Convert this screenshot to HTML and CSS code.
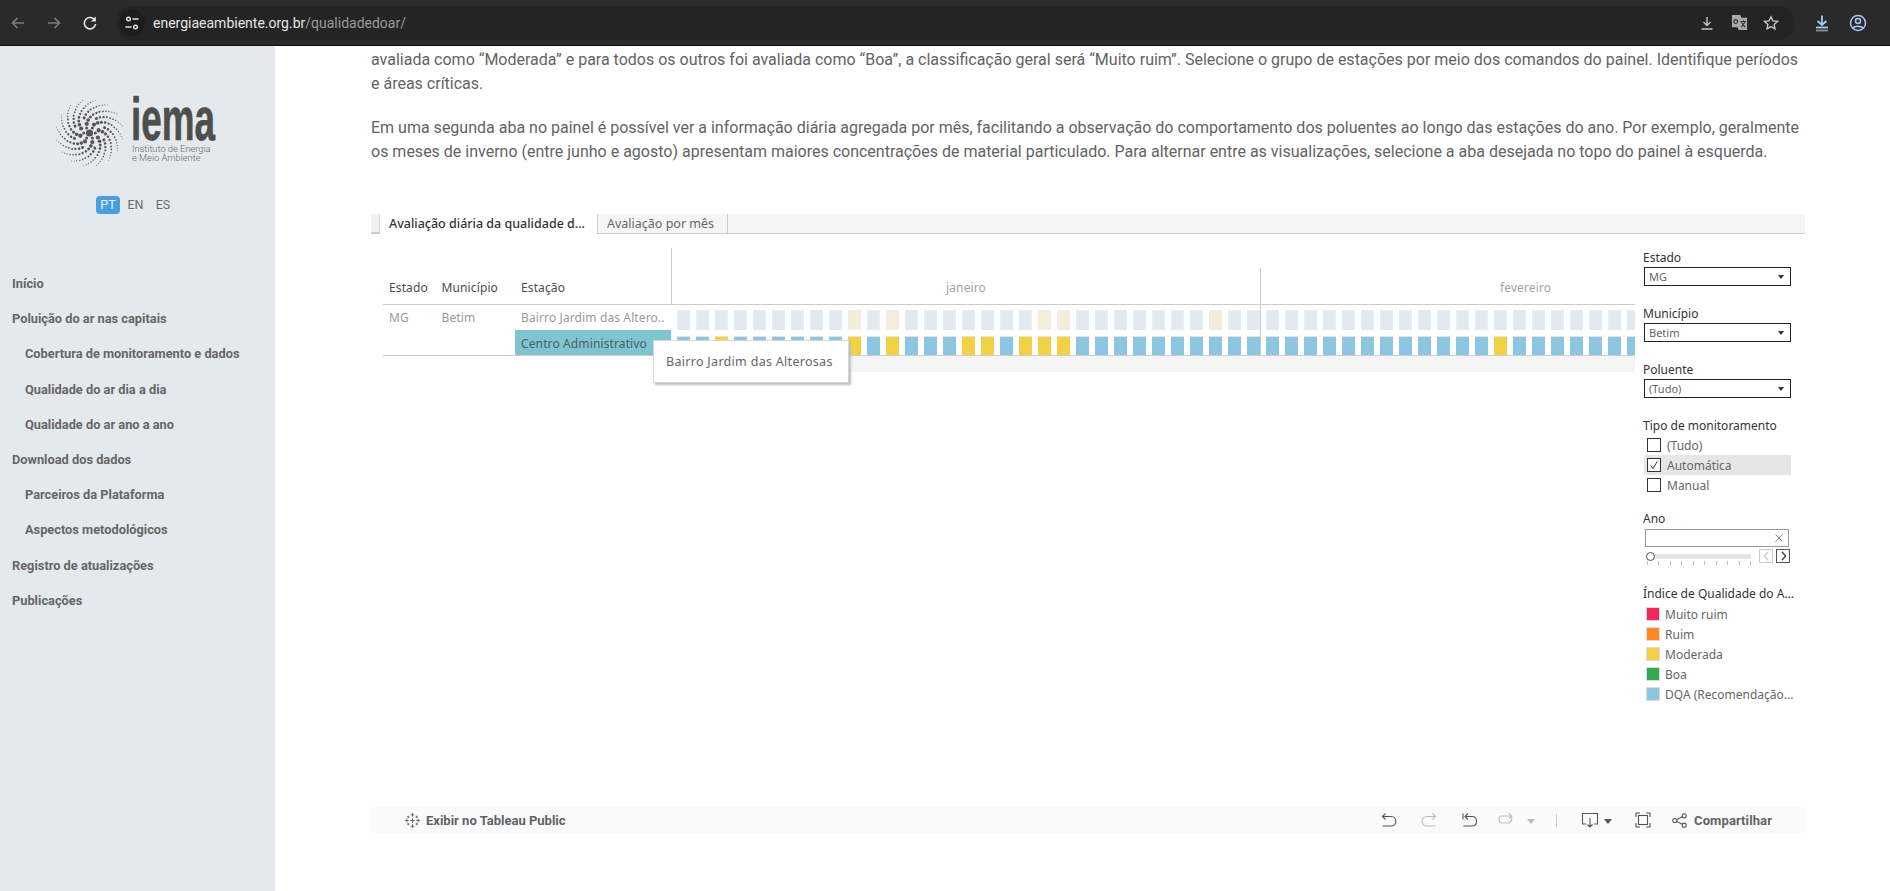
FILE: index.html
```html
<!DOCTYPE html>
<html lang="pt">
<head>
<meta charset="utf-8">
<title>Qualidade do ar</title>
<link rel="stylesheet" href="styles.css">
</head>
<body>
<header class="chrome">
  <svg class="ci dim" viewBox="0 0 16 16"><path d="M14 8H2.500M7.500 3 2.500 8l5 5"/></svg>
  <svg class="ci dim" viewBox="0 0 16 16"><path d="M2 8h11.500M8.500 3l5 5-5 5"/></svg>
  <svg class="ci lit" viewBox="0 0 16 16"><path d="M13 5.500A5.700 5.700 0 1 0 13.600 9"/><path class="fill" d="M13.800 1.600v5h-5z"/></svg>
  <div class="omnibox">
    <span class="tune"><svg viewBox="0 0 16 16"><circle cx="4.500" cy="4" r="1.800"/><path d="M8.500 4h6M1.500 12h6"/><circle cx="11.500" cy="12" r="1.800"/></svg></span>
    <span class="url">energiaeambiente.org.br<span class="path">/qualidadedoar/</span></span>
    <span class="spacer"></span>
    <svg class="oi" viewBox="0 0 16 16"><path d="M8 2v8M4.500 7 8 10.500 11.500 7M2.500 14h11"/></svg>
    <svg class="oi tr" viewBox="0 0 18 18"><path class="fill" d="M1 1h9l1 3h6v13H8l-1-3H1z"/><circle cx="5" cy="8" r="2" class="hole"/><path class="dark" d="M10 8h6M13 7v1M11 14l4-6M11 9l4 5"/></svg>
    <svg class="oi" viewBox="0 0 16 16"><path d="m8 1.800 1.900 4.100 4.500.5-3.300 3 .9 4.400L8 11.600 4 13.800l.9-4.400-3.300-3 4.500-.5z"/></svg>
  </div>
  <svg class="ci blue dl" viewBox="0 0 18 18"><path d="M9 1.500v9M4.500 7 9 11l4.500-4"/><path d="M3 13.500h12"/><path class="grey" d="M3 16.500h12"/></svg>
  <svg class="ci blue pf" viewBox="0 0 18 18"><circle cx="9" cy="9" r="7.500"/><circle cx="9" cy="7" r="2.500"/><path d="M4 14c1.500-2.500 8.500-2.500 10 0"/></svg>
</header>

<div class="page">
  <aside class="sidebar">
    <svg class="logo" viewBox="0 0 170 90">
      <defs>
        <g id="tail">
          <circle cx="10.700" cy="11.900" r="1.500"/><circle cx="10.500" cy="15.600" r="1.300"/><circle cx="9.300" cy="19.100" r="1.150"/><circle cx="8" cy="22.100" r="1"/><circle cx="5.700" cy="24.800" r=".9"/><circle cx="3.800" cy="27" r=".8"/><circle cx="1.500" cy="29" r=".7"/><circle cx="-1.100" cy="30.600" r=".6"/><circle cx="-3.300" cy="31.800" r=".5"/><circle cx="-5.800" cy="32.800" r=".45"/>
        </g>
        <g id="arm">
          <circle cx="8.400" cy="4.500" r="2.100"/><circle cx="10.100" cy="8.200" r="1.800"/><use href="#tail"/>
        </g>
      </defs>
      <g class="swirl" transform="translate(33.500 49)">
        <circle r="3.600"/>
        <circle cx="5.800" r="1.500"/><circle cx="2.900" cy="5" r="1.500"/><circle cx="-2.900" cy="5" r="1.500"/><circle cx="-5.800" r="1.500"/><circle cx="-2.900" cy="-5" r="1.500"/><circle cx="2.900" cy="-5" r="1.500"/>
        <use href="#arm"/><use href="#tail" transform="rotate(22.500)"/><use href="#arm" transform="rotate(45)"/><use href="#tail" transform="rotate(67.500)"/><use href="#arm" transform="rotate(90)"/><use href="#tail" transform="rotate(112.500)"/><use href="#arm" transform="rotate(135)"/><use href="#tail" transform="rotate(157.500)"/><use href="#arm" transform="rotate(180)"/><use href="#tail" transform="rotate(202.500)"/><use href="#arm" transform="rotate(225)"/><use href="#tail" transform="rotate(247.500)"/><use href="#arm" transform="rotate(270)"/><use href="#tail" transform="rotate(292.500)"/><use href="#arm" transform="rotate(315)"/><use href="#tail" transform="rotate(337.500)"/>
      </g>
      <text class="iema" transform="translate(75 56) scale(.604 1)">iema</text>
      <text class="inst" x="76" y="68">Instituto de Energia</text>
      <text class="inst" x="76" y="77">e Meio Ambiente</text>
    </svg>
    <div class="langs"><span class="lang on">PT</span><span class="lang">EN</span><span class="lang">ES</span></div>
    <nav class="nav">
      <a>Início</a>
      <a>Poluição do ar nas capitais</a>
      <a class="sub">Cobertura de monitoramento e dados</a>
      <a class="sub">Qualidade do ar dia a dia</a>
      <a class="sub">Qualidade do ar ano a ano</a>
      <a>Download dos dados</a>
      <a class="sub">Parceiros da Plataforma</a>
      <a class="sub">Aspectos metodológicos</a>
      <a>Registro de atualizações</a>
      <a>Publicações</a>
    </nav>
  </aside>

  <main class="main">
    <p class="para">avaliada como “Moderada” e para todos os outros foi avaliada como “Boa”, a classificação geral será “Muito ruim”. Selecione o grupo de estações por meio dos comandos do painel. Identifique períodos e áreas críticas.</p>
    <p class="para">Em uma segunda aba no painel é possível ver a informação diária agregada por mês, facilitando a observação do comportamento dos poluentes ao longo das estações do ano. Por exemplo, geralmente os meses de inverno (entre junho e agosto) apresentam maiores concentrações de material particulado. Para alternar entre as visualizações, selecione a aba desejada no topo do painel à esquerda.</p>

    <section class="viz">
      <div class="tabs">
        <span class="stub"></span>
        <span class="tab active">Avaliação diária da qualidade d...</span>
        <span class="tab">Avaliação por mês</span>
      </div>
      <div class="vizbody">
        <div class="sheet">
          <div class="thead">
            <span class="col c1 th">Estado</span>
            <span class="col c2 th">Município</span>
            <span class="col c3 th">Estação</span>
            <div class="months">
              <span class="month jan">janeiro</span>
              <span class="month feb">fevereiro</span>
            </div>
          </div>
          <div class="row r1">
            <span class="col c1">MG</span>
            <span class="col c2">Betim</span>
            <span class="col c3">Bairro Jardim das Altero..</span>
            <div class="cells">
              <i></i><i></i><i></i><i></i><i></i><i></i><i></i><i></i><i></i><i class="py"></i><i></i><i class="py"></i><i></i><i></i><i></i><i></i><i></i><i></i><i></i><i class="py"></i><i class="py"></i><i></i><i></i><i></i><i></i><i></i><i></i><i></i><i class="py"></i><i></i><i></i><i></i><i></i><i></i><i></i><i></i><i></i><i></i><i></i><i></i><i></i><i></i><i></i><i></i><i></i><i></i><i></i><i></i><i></i><i></i><i></i>
            </div>
          </div>
          <div class="row r2">
            <span class="col c1"></span>
            <span class="col c2"></span>
            <span class="col c3 hl">Centro Administrativo</span>
            <div class="cells strong">
              <i></i><i></i><i class="y"></i><i></i><i></i><i></i><i></i><i></i><i></i><i class="y"></i><i></i><i class="y"></i><i></i><i></i><i></i><i class="y"></i><i class="y"></i><i></i><i class="y"></i><i class="y"></i><i class="y"></i><i></i><i></i><i></i><i></i><i></i><i></i><i></i><i></i><i></i><i></i><i></i><i></i><i></i><i></i><i></i><i></i><i></i><i></i><i></i><i></i><i></i><i></i><i class="y"></i><i></i><i></i><i></i><i></i><i></i><i></i><i></i>
            </div>
          </div>
          <div class="band"></div>
          <div class="tooltip">Bairro Jardim das Alterosas</div>
        </div>

        <div class="filters">
          <div class="group">
            <div class="flabel">Estado</div>
            <div class="select"><span>MG</span><b class="caret"></b></div>
          </div>
          <div class="group">
            <div class="flabel">Município</div>
            <div class="select"><span>Betim</span><b class="caret"></b></div>
          </div>
          <div class="group">
            <div class="flabel">Poluente</div>
            <div class="select"><span>(Tudo)</span><b class="caret"></b></div>
          </div>
          <div class="group tight">
            <div class="flabel">Tipo de monitoramento</div>
            <div class="check"><span class="box"></span>(Tudo)</div>
            <div class="check sel"><span class="box"><svg viewBox="0 0 13 13"><path d="m3 7 2.500 3.500L10 2.500"/></svg></span>Automática</div>
            <div class="check"><span class="box"></span>Manual</div>
          </div>
          <div class="group ano">
            <div class="flabel">Ano</div>
            <div class="yearbox"><svg viewBox="0 0 8 8"><path d="m.5.5 7 7M7.500.5l-7 7"/></svg></div>
            <div class="sliderrow">
              <div class="slider"><span class="thumb"></span></div>
              <span class="step off"><svg viewBox="0 0 8 12"><path d="M6 1 1.500 6 6 11"/></svg></span>
              <span class="step"><svg viewBox="0 0 8 12"><path d="M2 1l4.500 5L2 11"/></svg></span>
            </div>
          </div>
          <div class="group legend">
            <div class="flabel">Índice de Qualidade do A...</div>
            <div class="lrow"><span class="sw s1"></span>Muito ruim</div>
            <div class="lrow"><span class="sw s2"></span>Ruim</div>
            <div class="lrow"><span class="sw s3"></span>Moderada</div>
            <div class="lrow"><span class="sw s4"></span>Boa</div>
            <div class="lrow"><span class="sw s5"></span>DQA (Recomendação...</div>
          </div>
        </div>
      </div>
      <footer class="toolbar">
        <svg class="tlogo" viewBox="0 0 18 18"><path d="M9 1v4M7 3h4M9 13v4M7 15h4M1 9h4M3 7v4M13 9h4M15 7v4M4.500 4v2.500M3.300 5.200h2.400M13.500 4v2.500M12.300 5.200h2.400M4.500 11.500V14M3.300 12.800h2.400M13.500 11.500V14M12.300 12.800h2.400M9 6.500v5M6.500 9h5"/></svg>
        <span class="tlink">Exibir no Tableau Public</span>
        <span class="spacer"></span>
        <svg class="ti undo" viewBox="0 0 16 16"><path d="M1.500 4.500H10c6.500 0 6.500 9.500 0 9.500H1.500M4.500 1.500l-3 3 3 3"/></svg>
        <svg class="ti off redo" viewBox="0 0 16 16"><path d="M14.500 4.500H6c-6.500 0-6.500 9.500 0 9.500h8.500M11.500 1.500l3 3-3 3"/></svg>
        <svg class="ti reset" viewBox="0 0 16 16"><path d="M1 1.500v6M3 4.500h7c6 0 6 9.500 0 9.500H1.500M6 1.500l-3 3 3 3"/></svg>
        <svg class="ti off all" viewBox="0 0 16 16"><path d="M14.500 4H5C1 4 1 11 5 11h6c4 0 4-5 3.500-7M12 1.500 14.500 4 12 6.500"/></svg>
        <b class="tcaret off"></b>
        <span class="tsep"></span>
        <svg class="ti dlt" viewBox="0 0 18 18"><path d="M5 13H1.500V2.500h15V13H13M9 7v9M6.500 13.500 9 16l2.500-2.500"/></svg>
        <b class="tcaret"></b>
        <svg class="ti fs" viewBox="0 0 16 16"><path d="M1 5V1h4M11 1h4v4M15 11v4h-4M5 15H1v-4"/><rect x="3.500" y="3.500" width="9" height="9"/></svg>
        <svg class="ti sh" viewBox="0 0 16 16"><circle cx="3" cy="8" r="2.200"/><circle cx="13" cy="3" r="2.200"/><circle cx="13" cy="13" r="2.200"/><path d="m5 7 6-3M5 9l6 3"/></svg>
        <span class="tlink share">Compartilhar</span>
      </footer>
    </section>
  </main>
</div>
</body>
</html>
```

FILE: styles.css
```css
* { box-sizing: border-box; }
html, body { margin: 0; height: 891px; overflow: hidden; background: #fff; }
body { font-family: Roboto, "Liberation Sans", sans-serif; }
svg { display: block; fill: none; }

/* browser chrome */
.chrome { height: 46px; background: #2a2a2a; border-bottom: 1px solid #111; display: flex; align-items: center; padding-left: 10px; }
.ci { width: 16px; height: 16px; stroke-width: 1.600; margin-right: 20px; flex: none; }
.ci.dim { stroke: #7c7c7c; }
.ci.lit { stroke: #e8e8e8; }
.ci .fill { fill: #e8e8e8; stroke: none; }
.omnibox { width: 1679px; height: 34px; margin-left: -2px; border-radius: 17px; background: #242424; display: flex; align-items: center; padding-left: 3px; flex: none; }
.tune { width: 26px; height: 26px; border-radius: 50%; background: #1d1d1d; display: flex; align-items: center; justify-content: center; margin-right: 8px; }
.tune svg { width: 16px; height: 16px; stroke: #e3e3e3; stroke-width: 1.400; }
.url { font-size: 14px; color: #e6e6e6; }
.path { color: #9a9a9a; }
.spacer { flex: 1; }
.oi { width: 16px; height: 16px; stroke: #c4c4c4; stroke-width: 1.400; margin-right: 16px; }
.oi.tr { width: 17px; height: 17px; stroke: none; margin-right: 15px; }
.oi.tr .fill { fill: #a9a9a9; }
.oi.tr .hole { fill: none; stroke: #333; stroke-width: 1.200; }
.oi.tr .dark { stroke: #333; stroke-width: 1.200; }
.ci.blue { stroke: #a8c7fa; }
.ci.blue .grey { stroke: #8e8e8e; }
.ci.dl { width: 18px; height: 18px; margin-left: 18px; margin-right: 18px; stroke-width: 1.800; }
.ci.pf { width: 18px; height: 18px; margin: 0; stroke-width: 1.500; }

/* page */
.page { display: flex; height: 845px; }
.sidebar { width: 275px; background: #e4e9ee; flex: none; padding-top: 38px; }
.logo { width: 170px; height: 90px; margin-left: 56px; }
.swirl { fill: #555; }
.iema { font-family: "Liberation Sans", sans-serif; font-size: 61px; font-weight: 700; fill: #4e4e4c; stroke: #4e4e4c; stroke-width: .7; }
.inst { font-family: Roboto, sans-serif; font-size: 9.300px; font-weight: 300; fill: #666; }
.langs { display: flex; margin-top: 21px; padding-left: 96px; height: 19px; align-items: center; font-size: 12.500px; color: #6b6b6b; }
.lang { width: 24px; height: 18px; line-height: 18px; text-align: center; margin-right: 3.500px; }
.lang.on { background: #4a9de0; color: #f1f6fb; border-radius: 4px; }
.nav { margin-top: 52px; display: flex; flex-direction: column; }
.nav a { height: 35.200px; line-height: 35.200px; padding-left: 12px; font-size: 12.800px; font-weight: 700; color: #666; white-space: nowrap; }
.nav a.sub { padding-left: 25px; }

.main { flex: 1; padding: 2px 85px 0 96px; min-width: 0; }
.para { margin: 0 0 20px; font-size: 16px; line-height: 24px; color: #636363; }

/* embedded viz */
.viz { margin-top: 50px; font-family: "Noto Sans", sans-serif; }
.tabs { display: flex; height: 20px; background: #f5f5f5; border-bottom: 1px solid #ccc; font-size: 12.500px; }
.stub { width: 9px; background: #f2f2f2; border-right: 1px solid #d4d4d4; border-bottom: 1px solid #ccc; }
.tab { height: 19px; line-height: 19px; padding: 0 9px; width: 130px; color: #666; border-right: 1px solid #ccc; white-space: nowrap; }
.tab.active { width: 218px; height: 20px; background: #fff; color: #333; font-weight: 500; border-right: 1px solid #ccc; }

.vizbody { display: flex; height: 573px; }
.sheet { width: 1264px; padding: 14px 0 0 12px; position: relative; font-size: 12px; color: #999; flex: none; letter-spacing: .12px; }
.thead { display: flex; height: 57px; border-bottom: 1px solid #ccc; }
.col { flex: none; padding-left: 6px; white-space: nowrap; overflow: hidden; }
.c1 { width: 52.500px; }
.c2 { width: 79.500px; }
.c3 { width: 156px; }
.th { color: #4c4c4c; padding-top: 31px; line-height: 18px; }
.months { flex: 1; display: flex; border-left: 1px solid #ccc; min-width: 0; }
.month { padding-top: 31px; line-height: 18px; text-align: center; color: #a3a3a3; flex: none; }
.jan { width: 588px; }
.feb { width: 531px; margin-top: 20px; padding-top: 11px; border-left: 1px solid #ccc; text-align: left; padding-left: 239px; }
.row { display: flex; }
.r1 { height: 25px; }
.r2 { height: 26px; border-bottom: 1px solid #ccc; }
.r1 .col { line-height: 26px; }
.r2 .col { padding-top: 1px; line-height: 25px; }
.hl { background: #7fc5d1; color: #4b5f65; }
.cells { flex: 1; display: flex; gap: 6px; align-items: flex-end; padding-left: 6px; overflow: hidden; min-width: 0; background: linear-gradient(#ccc, #ccc) 589px 0 / 1px 100% no-repeat; }
.r2 .cells { align-items: flex-start; padding-top: 6px; }
.cells i { flex: none; width: 13px; height: 20px; background: #e0eaef; border: 1px solid #e9ecee; border-bottom: 0; }
.cells i.py { background: #f3edd9; }
.strong i { height: 19px; background: #8dc6e0; border-color: #e3e3e3; border-width: 1px 0 0; }
.strong i.y { background: #f2d145; }
.band { height: 16px; margin-left: 288px; background: #f5f5f5; }
.tooltip { position: absolute; left: 282px; top: 106px; width: 196px; height: 43px; background: #fff; border: 1px solid #d6d6d6; box-shadow: 2px 2px 2px #bdbdbd; padding-left: 12px; line-height: 42px; font-size: 12.500px; color: #666; letter-spacing: .3px; white-space: nowrap; }

/* filters */
.filters { flex: 1; padding: 16px 14px 0 8px; font-size: 11.500px; color: #333; min-width: 0; }
.group { margin-bottom: 20px; }
.group.tight { margin-bottom: 16px; }
.group.ano { margin-bottom: 21px; }
.flabel { height: 16px; line-height: 16px; font-size: 12px; color: #333; white-space: nowrap; }
.select { margin: 1px 0 0 1px; height: 19px; border: 1px solid #222; display: flex; justify-content: space-between; align-items: center; padding: 0 6px 0 4px; color: #666; font-size: 11px; }
.caret { width: 0; height: 0; border: 3.500px solid transparent; border-top: 4px solid #333; border-bottom: 0; }
.check { height: 20px; display: flex; align-items: center; margin-left: 1px; padding-left: 3px; font-size: 12px; color: #666; }
.group.tight .flabel { margin-bottom: 1px; }
.check.sel { background: #e6e6e6; }
.box { width: 14px; height: 14px; border: 1px solid #333; background: #fff; margin-right: 6px; flex: none; }
.box svg { width: 12px; height: 12px; stroke: #333; stroke-width: 1; }
.yearbox { margin: 2px 0 0 2px; width: 144px; height: 18px; border: 1px solid #999; display: flex; justify-content: flex-end; align-items: center; padding-right: 5px; }
.yearbox svg { width: 8px; height: 8px; stroke: #666; stroke-width: .8; }
.sliderrow { display: flex; height: 16px; margin-top: 2px; align-items: flex-start; padding-left: 4px; }
.slider { width: 104px; height: 5px; margin-top: 5px; margin-right: 8px; background: #e6e6e6; position: relative; flex: none; }
.slider::after { content: ""; position: absolute; left: 0; right: 0; top: 7px; height: 4px; background: repeating-linear-gradient(90deg, #bbb 0 1px, transparent 1px 11.500px); }
.thumb { position: absolute; left: -1px; top: -2px; width: 9px; height: 9px; border: 1px solid #555; border-radius: 50%; background: #fff; }
.step { width: 14px; height: 14px; border: 1px solid #555; margin-right: 3px; display: flex; align-items: center; justify-content: center; flex: none; }
.step.off { border-color: #ccc; }
.step svg { width: 7px; height: 10px; stroke: #444; stroke-width: 1.700; }
.step.off svg { stroke: #ccc; }
.lrow { height: 20px; display: flex; align-items: center; font-size: 12px; color: #666; padding-left: 3px; white-space: nowrap; }
.legend .flabel { margin-bottom: 2px; }
.sw { width: 14px; height: 14px; margin-right: 5px; border: 1px solid #ddd; flex: none; }
.s1 { background: #f0285a; }
.s2 { background: #ff8a24; }
.s3 { background: #f2d145; }
.s4 { background: #30a950; }
.s5 { background: #8dc6e0; }

/* toolbar */
.toolbar { height: 26px; background: #fafafa; display: flex; align-items: center; padding: 0 33px 0 33px; font-family: Roboto, sans-serif; }
.tlogo { width: 17px; height: 17px; stroke: #666; stroke-width: 1; margin: 0 5px 0 0; }
.tlink { font-size: 13px; font-weight: 700; color: #5f6368; white-space: nowrap; }
.share { letter-spacing: .1px; }
.ti { width: 16px; height: 16px; stroke: #555; stroke-width: 1.100; flex: none; }
.ti.off { stroke: #bbb; }
.redo { margin-left: 24px; }
.reset { margin-left: 25px; }
.all { margin-left: 19px; }
.tcaret { width: 0; height: 0; border: 4px solid transparent; border-top: 5px solid #555; border-bottom: 0; margin-left: 5px; margin-top: 2px; }
.tcaret.off { border-top-color: #bbb; margin-left: 14px; }
.tsep { width: 1px; height: 13px; background: #ccc; margin: 0 24px 0 21px; }
.dlt { width: 18px; height: 18px; }
.fs { margin-left: 23px; }
.ti.sh { width: 15px; height: 15px; margin-left: 21px; margin-right: 7px; }
```
